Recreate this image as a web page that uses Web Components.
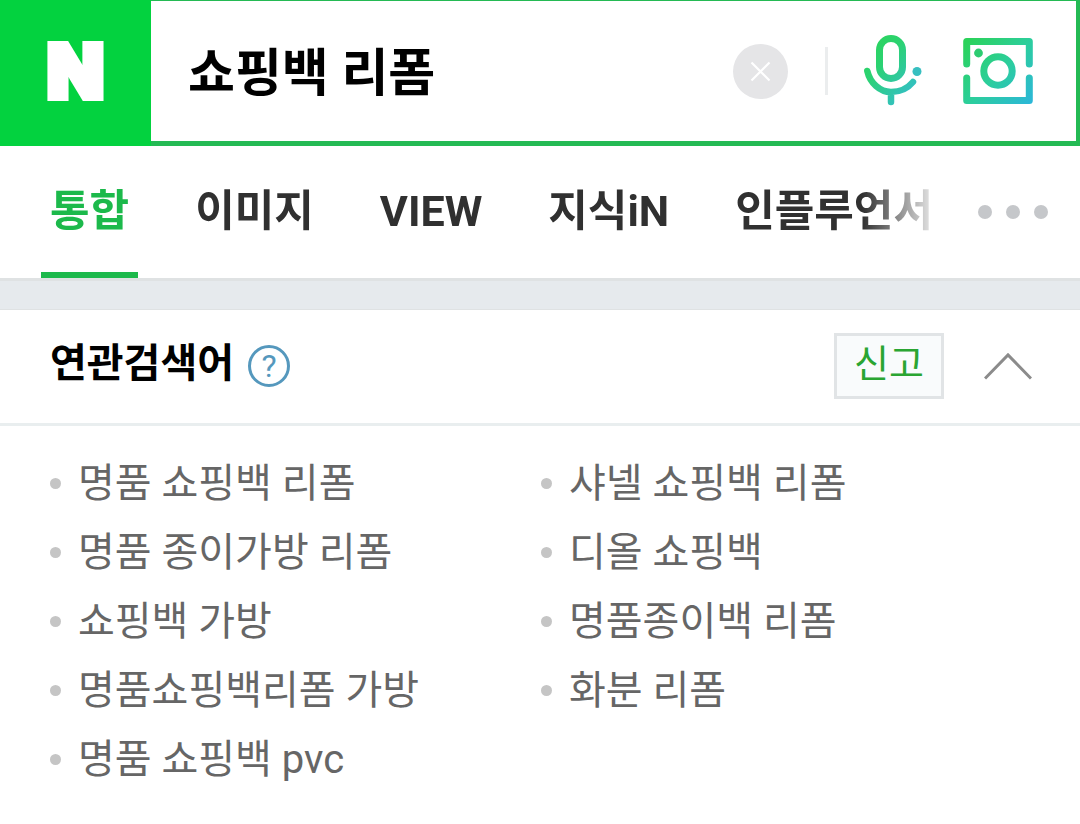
<!DOCTYPE html>
<html lang="ko">
<head>
<meta charset="utf-8">
<meta name="viewport" content="width=device-width, initial-scale=1">
<title>쇼핑백 리폼 : 네이버 검색</title>
<style>
  body { margin: 0; background: #fff; font-family: Roboto, "Noto Sans CJK KR", sans-serif; }
</style>
</head>
<body>
<search-page></search-page>

<script>
const define = (name, html, setup) => {
  const template = document.createElement('template');
  template.innerHTML = html;
  customElements.define(name, class extends HTMLElement {
    constructor() {
      super();
      this.attachShadow({ mode: 'open' }).append(template.content.cloneNode(true));
    }
    connectedCallback() { if (setup) setup(this, this.shadowRoot); }
  });
};

define('search-header', `
  <style>
    :host { display: flex; height: 146px; background: #03d23f; }
    .logo { flex: none; width: 151px; display: flex; align-items: center; justify-content: center;
      padding-bottom: 4px; box-sizing: border-box; color: #fff; text-decoration: none;
      font: 900 74px/80px Inter, sans-serif; -webkit-text-stroke: 6px #fff; }
    form { flex: 1; min-width: 0; display: flex; align-items: center; box-sizing: border-box;
      background: #fff; border: solid #24ba54; border-width: 1px 4px 5px 0; padding: 0 43px 0 37px; }
    input { flex: 1; min-width: 0; height: 80px; margin: 6px 0 0; padding: 0; box-sizing: border-box; border: 0; outline: 0; background: none;
      color: #000; font: 700 51px/80px Roboto, "Noto Sans CJK KR", sans-serif; }
    button { flex: none; border: 0; padding: 0; background: none; display: block; }
    svg { display: block; }
    .bar { flex: none; width: 3px; height: 48px; margin: 0 35px 0 37px; background: #ebedee; }
    .camera { margin-left: 40px; }
  </style>
  <a class="logo" href="#" aria-label="NAVER">N</a>
  <form>
    <input type="text" name="query" aria-label="검색어" value="쇼핑백 리폼">
    <button type="reset" aria-label="지우기">
      <svg width="55" height="55" viewBox="0 0 55 55"><circle cx="27.500" cy="27.500" r="27.500" fill="#e5e5e7"/><path d="M18.500 18.500 36.500 36.500M36.500 18.500 18.500 36.500" stroke="#fff" stroke-width="2.200"/></svg>
    </button>
    <span class="bar"></span>
    <button type="button" aria-label="음성 검색">
      <svg width="60" height="72" viewBox="0 0 60 72" fill="none" stroke-linecap="round">
        <defs><linearGradient id="m" gradientUnits="userSpaceOnUse" x1="6" y1="12" x2="56" y2="58"><stop offset="0" stop-color="#2bd45f"/><stop offset=".3" stop-color="#2bd272"/><stop offset="1" stop-color="#35bdd0"/></linearGradient></defs>
        <g stroke="url(#m)" stroke-width="6.500">
          <rect x="16.500" y="3.500" width="23" height="40" rx="11.500" stroke-width="7"/>
          <path d="M4.300 36C7 48 17 57 28 57 37 57 45 53 50 47M28 57V67"/>
        </g>
        <circle cx="54" cy="36.500" r="4.500" fill="#37bfc0"/>
      </svg>
    </button>
    <button class="camera" type="button" aria-label="이미지 검색">
      <svg width="70" height="68" viewBox="0 0 70 68" fill="none" stroke-linecap="round" stroke-linejoin="round">
        <defs><linearGradient id="c" gradientUnits="userSpaceOnUse" x1="4" y1="4" x2="68" y2="66"><stop offset="0" stop-color="#2bd25a"/><stop offset=".5" stop-color="#2cce9c"/><stop offset="1" stop-color="#2bb7d8"/></linearGradient></defs>
        <g stroke="url(#c)" stroke-width="7">
          <path d="M3.700 27V4.500H66.300V27M3.700 41V63.500H66.300V41"/>
          <circle cx="35" cy="34" r="14.200"/>
        </g>
        <circle cx="15.500" cy="16" r="4.400" fill="#2ccc70"/>
      </svg>
    </button>
  </form>
`);

define('search-tab', `
  <style>
    :host { display: block; flex: none; }
    a { display: block; box-sizing: border-box; height: 132px; padding: 33px 9px 0; text-decoration: none;
      white-space: nowrap; color: #303030; font-size: 43px; line-height: 64px; font-weight: 700; }
    :host([current]) a { color: #1cb94b; border-bottom: 6px solid #1cb94b; }
  </style>
  <a href="#"><slot></slot></a>
`, (el, root) => {
  if (el.hasAttribute('current')) root.querySelector('a').setAttribute('aria-current', 'page');
});

define('search-tabs', `
  <style>
    :host { display: flex; justify-content: space-between; border-bottom: 3px solid #dfe2e3; padding: 0 32px 0 41px; }
    nav { flex: 1; min-width: 0; display: flex; gap: 48px; overflow: hidden;
      -webkit-mask-image: linear-gradient(to left, rgba(0,0,0,.08) 42px, #000 116px);
      mask-image: linear-gradient(to left, rgba(0,0,0,.08) 42px, #000 116px); }
    button { flex: none; border: 0; padding: 0; background: none; display: flex; align-items: center; gap: 14px; }
    i { width: 14px; height: 14px; border-radius: 50%; background: #c5c7ca; }
  </style>
  <nav aria-label="검색 영역"><slot></slot></nav>
  <button type="button" aria-label="더보기"><i></i><i></i><i></i></button>
`);

define('related-item', `
  <style>
    :host { display: flex; align-items: center; height: 69px; }
    :host::before { content: ""; flex: none; width: 11px; height: 11px; border-radius: 50%; background: #c5c5c5; margin-right: 17px; }
    a { color: #666; font-size: 40px; line-height: 69px; text-decoration: none; white-space: nowrap; }
  </style>
  <a href="#"><slot></slot></a>
`);

define('related-searches', `
  <style>
    :host { display: block; border-top: 28px solid #e6eaed; }
    header { display: flex; align-items: center; height: 114px; padding: 0 48px 0 50px;
      border-bottom: 3px solid #e9eeef; box-shadow: inset 0 1px #dfe2e3; }
    h2 { margin: 0; padding-bottom: 4px; font-size: 40px; line-height: 60px; font-weight: 700; color: #000; }
    button { flex: none; box-sizing: border-box; display: block; padding: 0; background: none; border: 0; font-family: inherit; }
    .help { width: 42px; height: 42px; margin-left: 14px; border: 3px solid #5598bd; border-radius: 50%;
      color: #5598bd; font-size: 32px; line-height: 36px; text-align: center; }
    .report { width: 110px; height: 66px; margin: 0 40px 0 auto; border: 3px solid #e1e4e6; background: #f9fbfc;
      color: #2aa532; font-size: 38px; line-height: 56px; padding-bottom: 4px; }
    svg { display: block; }
    .list { display: grid; grid-template-columns: 1fr 1fr; padding: 23px 48px 23px 50px; }
  </style>
  <section>
    <header>
      <h2>연관검색어</h2>
      <button class="help" type="button" aria-label="도움말">?</button>
      <button class="report" type="button">신고</button>
      <button type="button" aria-label="접기">
        <svg width="48" height="28" viewBox="0 0 48 28"><path d="M1 26.500 24 3 47 26.500" fill="none" stroke="#8b8b8b" stroke-width="3"/></svg>
      </button>
    </header>
    <div class="list" role="list"><slot></slot></div>
  </section>
`);

define('search-page', `
  <style>:host { display: block; }</style>
  <search-header></search-header>
  <search-tabs>
    <search-tab current>통합</search-tab>
    <search-tab>이미지</search-tab>
    <search-tab>VIEW</search-tab>
    <search-tab>지식iN</search-tab>
    <search-tab>인플루언서</search-tab>
  </search-tabs>
  <related-searches>
    <related-item role="listitem">명품 쇼핑백 리폼</related-item>
    <related-item role="listitem">샤넬 쇼핑백 리폼</related-item>
    <related-item role="listitem">명품 종이가방 리폼</related-item>
    <related-item role="listitem">디올 쇼핑백</related-item>
    <related-item role="listitem">쇼핑백 가방</related-item>
    <related-item role="listitem">명품종이백 리폼</related-item>
    <related-item role="listitem">명품쇼핑백리폼 가방</related-item>
    <related-item role="listitem">화분 리폼</related-item>
    <related-item role="listitem">명품 쇼핑백 pvc</related-item>
  </related-searches>
`);
</script>
</body>
</html>
